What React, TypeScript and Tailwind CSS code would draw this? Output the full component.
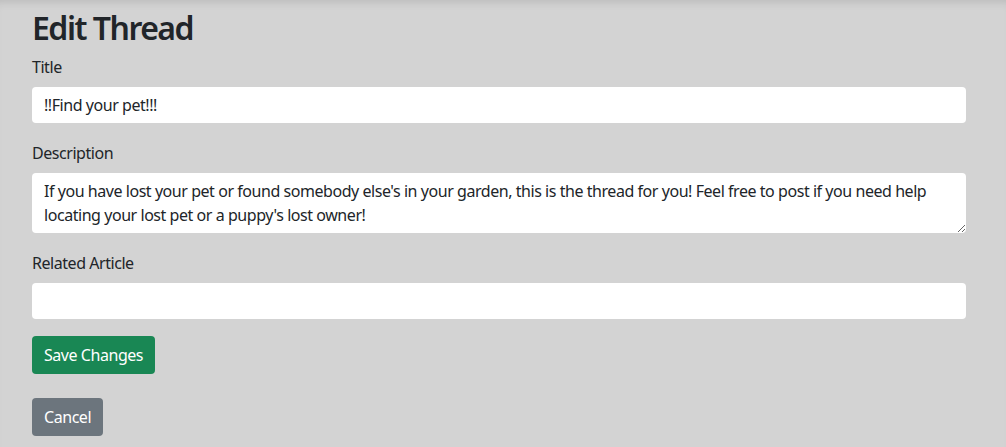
export default function App() {
  const font = { fontFamily: '"Noto Sans", "Segoe UI", sans-serif' };
  return (
    <div
      className="min-h-[447px] w-full bg-[#d3d3d3] text-[#212529] shadow-[inset_0_8px_8px_-6px_rgba(0,0,0,0.12)] tracking-[-0.45px]"
      style={font}
    >
      <div className="w-[934px] ml-8 pt-[9px]">
        <h2 className="text-[32px] leading-[38px] font-semibold tracking-[-1.5px] mb-2">Edit Thread</h2>
        <form className="flex flex-col">
          <div className="mb-[18px]">
            <label className="block text-base leading-6 mb-2">Title</label>
            <input
              className="block w-full h-[36px] rounded bg-white px-3 text-base text-[#212529] outline-none"
              defaultValue="!!Find your pet!!!"
            />
          </div>
          <div className="mb-[18px]">
            <label className="block text-base leading-6 mb-2">Description</label>
            <textarea
              className="block w-full h-[60px] rounded bg-white px-3 py-1.5 text-base leading-6 text-[#212529] outline-none"
              defaultValue="If you have lost your pet or found somebody else's in your garden, this is the thread for you! Feel free to post if you need help locating your lost pet or a puppy's lost owner!"
            />
          </div>
          <div className="mb-[17px]">
            <label className="block text-base leading-6 mb-2">Related Article</label>
            <input className="block w-full h-[36px] rounded bg-white px-3 text-base outline-none" />
          </div>
          <div>
            <button
              type="button"
              className="h-[38px] px-3 rounded bg-[#198754] text-white text-base leading-6"
            >
              Save Changes
            </button>
          </div>
        </form>
        <button
          type="button"
          className="mt-6 h-[38px] px-3 rounded bg-[#6c757d] text-white text-base leading-6"
        >
          Cancel
        </button>
      </div>
    </div>
  );
}
